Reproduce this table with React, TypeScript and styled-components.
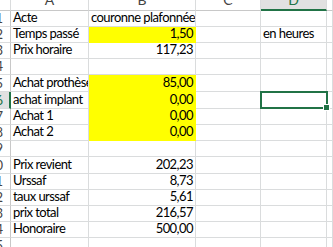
import React from "react";
import styled, { createGlobalStyle } from "styled-components";

const GRID = "#dadcdd";
const GREEN = "#217346";
const COLS = "11px 78px 107px 65px 66px 1fr";

type RowData = {
  n: number;
  h: number;
  a?: string;
  b?: string;
  bLeft?: boolean;
  yellow?: boolean;
  d?: string;
  selected?: boolean;
};

const rows: RowData[] = [
  { n: 1, h: 16, a: "Acte", b: "couronne plafonnée", bLeft: true },
  { n: 2, h: 16, a: "Temps passé", b: "1,50", yellow: true, d: "en heures" },
  { n: 3, h: 16, a: "Prix horaire", b: "117,23" },
  { n: 4, h: 16 },
  { n: 5, h: 17, a: "Achat prothèse", b: "85,00", yellow: true },
  { n: 6, h: 17, a: "achat implant", b: "0,00", yellow: true, selected: true },
  { n: 7, h: 16, a: "Achat 1", b: "0,00", yellow: true },
  { n: 8, h: 16, a: "Achat 2", b: "0,00", yellow: true },
  { n: 9, h: 16 },
  { n: 10, h: 17, a: "Prix revient", b: "202,23" },
  { n: 11, h: 16, a: "Urssaf", b: "8,73" },
  { n: 12, h: 16, a: "taux urssaf", b: "5,61" },
  { n: 13, h: 16, a: "prix total", b: "216,57" },
  { n: 14, h: 16, a: "Honoraire", b: "500,00" },
  { n: 15, h: 16 },
];

const GlobalStyle = createGlobalStyle`
  html, body {
    margin: 0;
    padding: 0;
    background: #ffffff;
    overflow: hidden;
  }
  body {
    font-family: Lato, "Liberation Sans", sans-serif;
  }
`;

const Sheet = styled.div`
  width: 333px;
  height: 247px;
  overflow: hidden;
  display: flex;
  flex-direction: column;
  background: #ffffff;
`;

const Row = styled.div<{ $h: number }>`
  display: grid;
  grid-template-columns: ${COLS};
  height: ${(p) => p.$h}px;
  flex-shrink: 0;
`;

const ColHead = styled.div<{ $active?: boolean }>`
  display: flex;
  justify-content: center;
  align-items: flex-start;
  overflow: hidden;
  color: ${(p) => (p.$active ? GREEN : "#444444")};
  background: ${(p) => (p.$active ? "#e1e1e1" : "#ffffff")};
  border-right: 1px solid ${GRID};
  border-bottom: ${(p) => (p.$active ? `2px solid ${GREEN}` : `1px solid #c8c8c8`)};
  box-sizing: border-box;
`;

const HeadText = styled.span`
  font-size: 14px;
  line-height: 15px;
  margin-top: -8px;
`;

const RowHead = styled.div<{ $active?: boolean }>`
  display: flex;
  justify-content: flex-end;
  align-items: flex-end;
  overflow: hidden;
  white-space: nowrap;
  font-size: 13px;
  line-height: 14px;
  padding-right: ${(p) => (p.$active ? 6 : 7)}px;
  padding-bottom: 1px;
  color: ${(p) => (p.$active ? GREEN : "#444444")};
  background: ${(p) => (p.$active ? "#e1e1e1" : "#ffffff")};
  border-right: ${(p) => (p.$active ? `2px solid ${GREEN}` : `1px solid #c8c8c8`)};
  border-bottom: 1px solid ${GRID};
  box-sizing: border-box;
`;

const Cell = styled.div<{ $right?: boolean; $fill?: boolean }>`
  position: relative;
  display: flex;
  align-items: flex-end;
  justify-content: ${(p) => (p.$right ? "flex-end" : "flex-start")};
  padding: 0 2px 2px 2px;
  overflow: hidden;
  white-space: nowrap;
  font-size: 13px;
  line-height: 14px;
  letter-spacing: -0.55px;
  color: #000000;
  background: ${(p) => (p.$fill ? "#ffff00" : "transparent")};
  border-right: 1px solid ${(p) => (p.$fill ? "#ffff00" : GRID)};
  border-bottom: 1px solid ${(p) => (p.$fill ? "#ffff00" : GRID)};
  box-sizing: border-box;
`;

const SelectedCell = styled(Cell)`
  overflow: visible;
`;

const SelectBox = styled.div`
  position: absolute;
  left: -1px;
  top: -1px;
  right: -2px;
  bottom: -1px;
  border: 2px solid ${GREEN};
  z-index: 2;
`;

const FillHandle = styled.div`
  position: absolute;
  right: -4px;
  bottom: -4px;
  width: 5px;
  height: 5px;
  background: ${GREEN};
  border: 1px solid #ffffff;
`;

export default function App() {
  return (
    <>
      <GlobalStyle />
      <Sheet>
        <Row $h={11}>
          <ColHead />
          <ColHead><HeadText>A</HeadText></ColHead>
          <ColHead><HeadText>B</HeadText></ColHead>
          <ColHead><HeadText>C</HeadText></ColHead>
          <ColHead $active><HeadText>D</HeadText></ColHead>
          <ColHead />
        </Row>
        {rows.map((r) => {
          const DCell = r.selected ? SelectedCell : Cell;
          return (
            <Row key={r.n} $h={r.h}>
              <RowHead $active={r.selected}>{r.n}</RowHead>
              <Cell>{r.a}</Cell>
              <Cell $right={!r.bLeft} $fill={r.yellow}>
                {r.b}
              </Cell>
              <Cell />
              <DCell>
                {r.d}
                {r.selected && (
                  <SelectBox>
                    <FillHandle />
                  </SelectBox>
                )}
              </DCell>
              <Cell />
            </Row>
          );
        })}
      </Sheet>
    </>
  );
}
